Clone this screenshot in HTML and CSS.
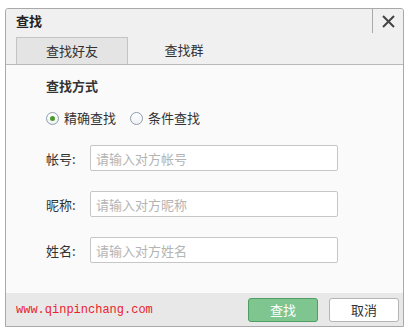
FILE: index.html
```html
<!DOCTYPE html>
<html lang="zh-CN">
<head>
    <meta charset="UTF-8">
    <title>查找</title>
    <link rel="stylesheet" href="styles.css">
</head>
<body>
    <div class="dialog">
        <div class="dialog-top">
            <div class="title-bar">
                <span class="title">查找</span>
                <button class="close-btn">
                    <svg width="13" height="13" viewBox="0 0 13 13"><path d="M1 1L12 12M12 1L1 12" stroke="#444" stroke-width="2"/></svg>
                </button>
            </div>
            <div class="tabs">
                <div class="tab active">查找好友</div>
                <div class="tab">查找群</div>
            </div>
        </div>

        <div class="content">
            <div class="section-title">查找方式</div>
            <div class="radio-row">
                <label class="radio checked"><span class="dot"></span>精确查找</label>
                <label class="radio"><span class="dot"></span>条件查找</label>
            </div>
            <div class="field">
                <span class="field-label">帐号:</span>
                <input type="text" placeholder="请输入对方帐号">
            </div>
            <div class="field">
                <span class="field-label">昵称:</span>
                <input type="text" placeholder="请输入对方昵称">
            </div>
            <div class="field">
                <span class="field-label">姓名:</span>
                <input type="text" placeholder="请输入对方姓名">
            </div>
        </div>

        <div class="footer">
            <span class="site">www.qinpinchang.com</span>
            <button class="btn btn-primary">查找</button>
            <button class="btn">取消</button>
        </div>
    </div>
</body>
</html>
```

FILE: styles.css
```css
* {
    margin: 0;
    padding: 0;
    box-sizing: border-box;
}

body {
    font-family: "Noto Sans CJK SC", "Liberation Sans", sans-serif;
    font-size: 13px;
    color: #333;
    background-color: #fff;
}

.dialog {
    margin: 8px 0 0 5px;
    width: 399px;
    height: 319px;
    border: 1px solid #a9a9a9;
    border-radius: 3px 3px 0 0;
    background-color: #fafafa;
    display: flex;
    flex-direction: column;
}

.dialog-top {
    background-color: #f0f0f0;
    border-bottom: 1px solid #b9b9b9;
    border-radius: 3px 3px 0 0;
}

.title-bar {
    display: flex;
    justify-content: space-between;
    height: 24px;
}

.title {
    padding: 3px 0 0 10px;
    font-weight: 700;
    color: #222;
    line-height: 18px;
}

.close-btn {
    width: 31px;
    height: 24px;
    border: none;
    border-left: 1px solid #a9a9a9;
    background: none;
    display: flex;
    align-items: center;
    justify-content: center;
}

.tabs {
    display: flex;
    margin: 4px 0 0 10px;
}

.tab {
    width: 112px;
    height: 27px;
    line-height: 26px;
    text-align: center;
    color: #333;
}

.tab.active {
    background-color: #e4e4e4;
    border: 1px solid #c4c4c4;
    border-bottom: none;
}

.content {
    flex-grow: 1;
    padding: 12px 0 0 40px;
}

.section-title {
    font-weight: 700;
    line-height: 18px;
    color: #333;
}

.radio-row {
    display: flex;
    gap: 14px;
    margin-top: 14px;
}

.radio {
    display: flex;
    align-items: center;
    gap: 5px;
    line-height: 18px;
}

.radio .dot {
    width: 13px;
    height: 13px;
    border-radius: 50%;
    border: 1px solid #8e9cad;
    background: linear-gradient(#fff, #eef1f4);
    display: flex;
    align-items: center;
    justify-content: center;
}

.radio.checked .dot::after {
    content: "";
    width: 5px;
    height: 5px;
    border-radius: 50%;
    background-color: #4c9a2a;
}

.field {
    display: flex;
    align-items: center;
    margin-top: 20px;
}

.radio-row + .field {
    margin-top: 18px;
}

.field-label {
    width: 44px;
    color: #333;
}

.field input {
    width: 248px;
    height: 26px;
    border: 1px solid #c6c6c6;
    border-radius: 2px;
    padding: 0 5px;
    font-family: inherit;
    font-size: 13px;
    background-color: #fff;
    outline: none;
}

.field input::placeholder {
    color: #b4b4b4;
}

.footer {
    height: 33px;
    background-color: #e8e8e8;
    display: flex;
    align-items: center;
    padding: 0 4px 0 10px;
    gap: 11px;
}

.site {
    flex-grow: 1;
    font-family: "Liberation Mono", monospace;
    font-size: 12px;
    color: #e8232c;
}

.btn {
    width: 70px;
    height: 24px;
    border: 1px solid #b4b4b4;
    border-radius: 3px;
    background-color: #fff;
    font-family: inherit;
    font-size: 13px;
    color: #333;
}

.btn-primary {
    background-color: #7ec58f;
    border-color: #4f9d62;
    color: #fff;
}
```
